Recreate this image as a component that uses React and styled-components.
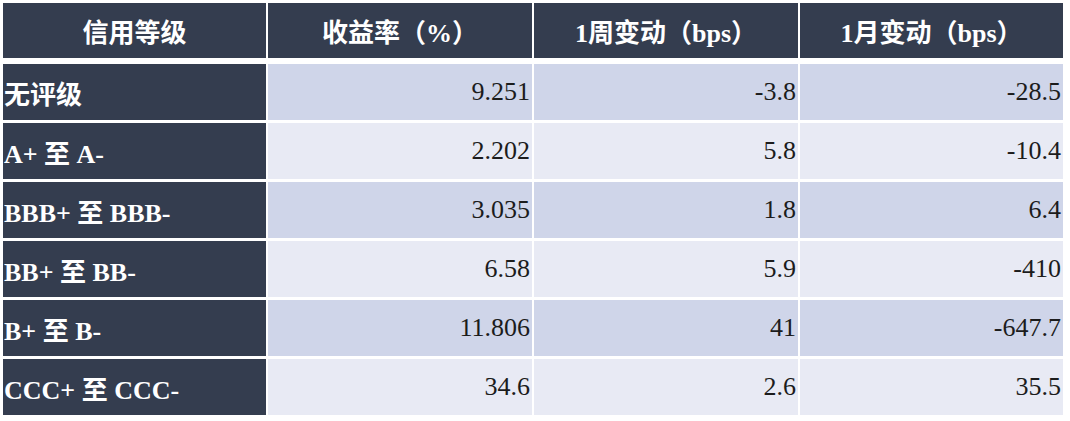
import styled, { createGlobalStyle } from "styled-components";

const GlobalStyle = createGlobalStyle`
  body {
    margin: 0;
    background: #ffffff;
  }
`;

const serif = `"Liberation Serif", "Times New Roman", Tinos, Times, "DejaVu Serif"`;

const rows = [
  { grade: "无评级", yieldRate: "9.251", week: "-3.8", month: "-28.5" },
  { grade: "A+ 至 A-", yieldRate: "2.202", week: "5.8", month: "-10.4" },
  { grade: "BBB+ 至 BBB-", yieldRate: "3.035", week: "1.8", month: "6.4" },
  { grade: "BB+ 至 BB-", yieldRate: "6.58", week: "5.9", month: "-410" },
  { grade: "B+ 至 B-", yieldRate: "11.806", week: "41", month: "-647.7" },
  { grade: "CCC+ 至 CCC-", yieldRate: "34.6", week: "2.6", month: "35.5" },
];

const Table = styled.div`
  display: flex;
  flex-direction: column;
  gap: 3px;
  padding: 3px 0 0 3px;
  width: 1060px;
`;

const Row = styled.div`
  display: grid;
  grid-template-columns: 263px 264px 264px 263px;
  column-gap: 2px;
  height: ${(p) => (p.$header ? "55px" : "56px")};
  margin-bottom: ${(p) => (p.$header ? "3px" : "0")};
`;

const HeadCell = styled.div`
  display: flex;
  align-items: center;
  justify-content: center;
  background: #343d4f;
  color: #ffffff;
  font-family: ${serif}, "Noto Sans CJK SC", serif;
  font-weight: 700;
  font-size: 26px;
`;

const GradeCell = styled.div`
  display: flex;
  align-items: center;
  padding-left: 1px;
  background: #343d4f;
  color: #ffffff;
  font-family: ${serif}, "Noto Sans CJK SC", serif;
  font-weight: 700;
  font-size: 26px;
  white-space: pre;
`;

const ValueCell = styled.div`
  display: flex;
  align-items: center;
  justify-content: flex-end;
  padding-right: 2px;
  background: ${(p) => (p.$odd ? "#cfd5e9" : "#e8eaf4")};
  color: #1c1c1c;
  font-family: ${serif}, serif;
  font-size: 26px;
`;

const App = () => {
  return (
    <>
      <GlobalStyle />
      <Table>
        <Row $header>
          <HeadCell>信用等级</HeadCell>
          <HeadCell>收益率（%）</HeadCell>
          <HeadCell>1周变动（bps）</HeadCell>
          <HeadCell>1月变动（bps）</HeadCell>
        </Row>
        {rows.map((r, i) => (
          <Row key={r.grade}>
            <GradeCell>{r.grade}</GradeCell>
            <ValueCell $odd={i % 2 === 0}>{r.yieldRate}</ValueCell>
            <ValueCell $odd={i % 2 === 0}>{r.week}</ValueCell>
            <ValueCell $odd={i % 2 === 0}>{r.month}</ValueCell>
          </Row>
        ))}
      </Table>
    </>
  );
};

export default App;
